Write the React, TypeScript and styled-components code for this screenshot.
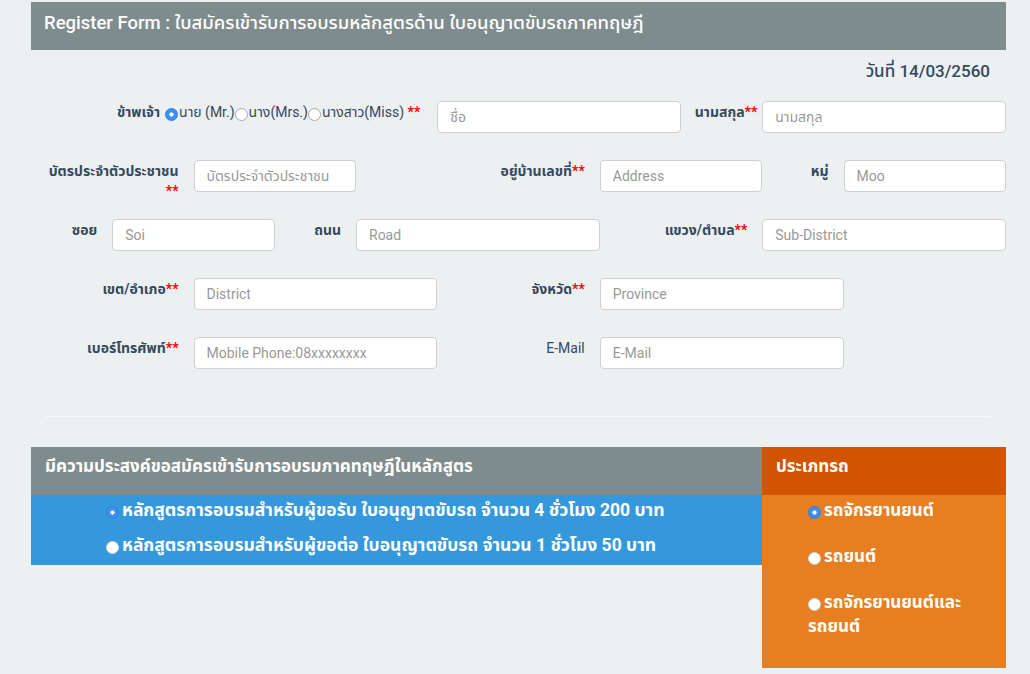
import React from 'react';
import styled, { createGlobalStyle } from 'styled-components';

const GlobalStyle = createGlobalStyle`
  html, body {
    margin: 0;
    padding: 0;
    background: #ecf0f1;
  }
  body {
    font-family: Roboto, "Noto Sans Thai", "Noto Sans Thai UI", Loma, Garuda, "Noto Sans", sans-serif;
    font-size: 14px;
    color: #34495e;
  }
  * {
    box-sizing: border-box;
  }
`;

const Page = styled.div`
  width: 975px;
  margin-left: 31px;
  padding-top: 2px;
  min-height: 674px;
`;

const TitleBar = styled.div`
  height: 48px;
  background: #7f8c8d;
  color: #fff;
  font-size: 18.5px;
  font-weight: 500;
  line-height: 22px;
  padding: 10px 13px 0;
`;

const DateLine = styled.div`
  text-align: right;
  font-size: 17px;
  font-weight: 500;
  line-height: 22px;
  padding: 10px 16px 0 0;
  color: #34495e;
`;

const FormBody = styled.div`
  padding-top: 19px;
`;

const Row = styled.div`
  display: grid;
  grid-template-columns: repeat(12, 1fr);
  height: 32px;
  margin-bottom: 27px;
  align-items: start;
`;

const Label = styled.label<{ $span: number; $pad?: number; $light?: boolean }>`
  grid-column: span ${({ $span }) => $span};
  text-align: right;
  font-weight: ${({ $light }) => ($light ? 400 : 700)};
  font-size: 14px;
  line-height: 20px;
  padding: 1px ${({ $pad }) => ($pad ?? 15)}px 0 0;
  color: #34495e;
`;

const Spacer = styled.div<{ $span: number }>`
  grid-column: span ${({ $span }) => $span};
`;

const Req = styled.span`
  color: #f00;
  font-weight: 700;
`;

const Input = styled.input<{ $span: number }>`
  grid-column: span ${({ $span }) => $span};
  height: 32px;
  width: 100%;
  border: 1px solid #cfcfcf;
  border-radius: 4px;
  background: #fff;
  padding: 0 12px;
  font-family: inherit;
  font-size: 14px;
  color: #555;
  outline: none;
  &::placeholder {
    color: #999;
  }
`;

const TitleGroup = styled.div<{ $span: number }>`
  grid-column: span ${({ $span }) => $span};
  text-align: right;
  white-space: nowrap;
  padding: 1px 17px 0 0;
  line-height: 20px;
  font-size: 14px;
  color: #34495e;
`;

const GroupLabel = styled.span`
  font-weight: 700;
  margin-right: 5px;
`;

const Radio = styled.input.attrs({ type: 'radio' })`
  appearance: none;
  -webkit-appearance: none;
  display: inline-block;
  width: 13px;
  height: 13px;
  margin: 0 1px 0 0;
  vertical-align: -4px;
  border-radius: 50%;
  border: 1px solid #a9a9a9;
  background: #fff;
  &:checked {
    border-color: #2f7fe0;
    background: radial-gradient(circle, #fff 0 1.8px, #3b8ff0 2.4px);
  }
`;

const WhiteRadio = styled(Radio)`
  border-color: #d6d6d6;
  margin-right: 3px;
  vertical-align: -3px;
`;

const Divider = styled.hr`
  border: none;
  border-top: 1px solid #f7f9f9;
  margin: 47px 16px 30px 14px;
`;

const Section = styled.div`
  display: flex;
  align-items: flex-start;
`;

const Column = styled.div<{ $width: number }>`
  width: ${({ $width }) => $width}px;
  flex: none;
`;

const SectionHead = styled.div<{ $bg: string }>`
  height: 48px;
  background: ${({ $bg }) => $bg};
  color: #fff;
  font-weight: 700;
  font-size: 17px;
  line-height: 22px;
  padding: 8px 14px 0;
`;

const CourseBody = styled.div`
  background: #3498db;
  height: 70px;
  padding: 0 0 0 75px;
`;

const CourseItem = styled.label`
  display: block;
  height: 30px;
  margin-bottom: 5px;
  padding-top: 4px;
  color: #fff;
  font-weight: 700;
  font-size: 17.5px;
  line-height: 22px;
  white-space: nowrap;
`;

const TypeBody = styled.div`
  background: #e67e22;
  height: 173px;
  padding: 3px 20px 0 46px;
`;

const TypeItem = styled.label`
  display: block;
  color: #fff;
  font-weight: 700;
  font-size: 17px;
  line-height: 24px;
  margin-bottom: 22px;
`;

export default function App() {
  return (
    <>
      <GlobalStyle />
      <Page>
        <TitleBar>Register Form : ใบสมัครเข้ารับการอบรมหลักสูตรด้าน ใบอนุญาตขับรถภาคทฤษฎี</TitleBar>
        <DateLine>วันที่ 14/03/2560</DateLine>
        <FormBody>
          <Row>
            <TitleGroup $span={5}>
              <GroupLabel>ข้าพเจ้า</GroupLabel>
              <Radio name="title" defaultChecked />
              นาย (Mr.)
              <Radio name="title" />
              นาง(Mrs.)
              <Radio name="title" />
              นางสาว(Miss) <Req>**</Req>
            </TitleGroup>
            <Input $span={3} placeholder="ชื่อ" />
            <Label $span={1} $pad={5}>
              นามสกุล<Req>**</Req>
            </Label>
            <Input $span={3} placeholder="นามสกุล" />
          </Row>
          <Row>
            <Label $span={2}>
              บัตรประจำตัวประชาชน
              <br />
              <Req>**</Req>
            </Label>
            <Input $span={2} placeholder="บัตรประจำตัวประชาชน" />
            <Label $span={3}>
              อยู่บ้านเลขที่<Req>**</Req>
            </Label>
            <Input $span={2} placeholder="Address" />
            <Label $span={1}>หมู่</Label>
            <Input $span={2} placeholder="Moo" />
          </Row>
          <Row>
            <Label $span={1}>ซอย</Label>
            <Input $span={2} placeholder="Soi" />
            <Label $span={1}>ถนน</Label>
            <Input $span={3} placeholder="Road" />
            <Label $span={2}>
              แขวง/ตำบล<Req>**</Req>
            </Label>
            <Input $span={3} placeholder="Sub-District" />
          </Row>
          <Row>
            <Label $span={2}>
              เขต/อำเภอ<Req>**</Req>
            </Label>
            <Input $span={3} placeholder="District" />
            <Label $span={2}>
              จังหวัด<Req>**</Req>
            </Label>
            <Input $span={3} placeholder="Province" />
            <Spacer $span={2} />
          </Row>
          <Row>
            <Label $span={2}>
              เบอร์โทรศัพท์<Req>**</Req>
            </Label>
            <Input $span={3} placeholder="Mobile Phone:08xxxxxxxx" />
            <Label $span={2} $light>
              E-Mail
            </Label>
            <Input $span={3} placeholder="E-Mail" />
            <Spacer $span={2} />
          </Row>
        </FormBody>
        <Divider />
        <Section>
          <Column $width={731}>
            <SectionHead $bg="#7f8c8d">มีความประสงค์ขอสมัครเข้ารับการอบรมภาคทฤษฎีในหลักสูตร</SectionHead>
            <CourseBody>
              <CourseItem>
                <WhiteRadio name="course" defaultChecked />
                หลักสูตรการอบรมสำหรับผู้ขอรับ ใบอนุญาตขับรถ จำนวน 4 ชั่วโมง 200 บาท
              </CourseItem>
              <CourseItem>
                <WhiteRadio name="course" />
                หลักสูตรการอบรมสำหรับผู้ขอต่อ ใบอนุญาตขับรถ จำนวน 1 ชั่วโมง 50 บาท
              </CourseItem>
            </CourseBody>
          </Column>
          <Column $width={244}>
            <SectionHead $bg="#d35400">ประเภทรถ</SectionHead>
            <TypeBody>
              <TypeItem>
                <WhiteRadio name="vehicle" defaultChecked />
                รถจักรยานยนต์
              </TypeItem>
              <TypeItem>
                <WhiteRadio name="vehicle" />
                รถยนต์
              </TypeItem>
              <TypeItem>
                <WhiteRadio name="vehicle" />
                รถจักรยานยนต์และรถยนต์
              </TypeItem>
            </TypeBody>
          </Column>
        </Section>
      </Page>
    </>
  );
}
